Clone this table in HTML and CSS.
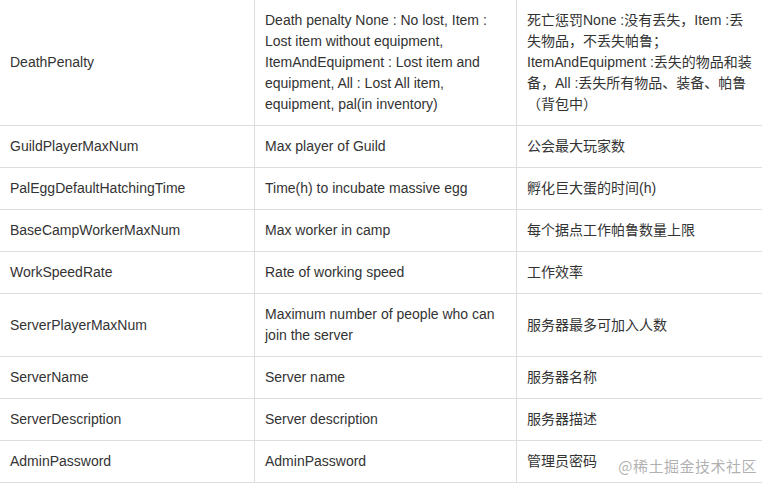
FILE: index.html
```html
<!DOCTYPE html>
<html lang="zh-CN">
<head>
<meta charset="utf-8">
<title>Config</title>
<link rel="stylesheet" href="styles.css">
</head>
<body>
<table class="cfg">
  <colgroup>
    <col class="c1">
    <col class="c2">
    <col class="c3">
  </colgroup>
  <tbody>
    <tr>
      <td>DeathPenalty</td>
      <td>Death penalty None : No lost, Item : Lost item without equipment, ItemAndEquipment : Lost item and equipment, All : Lost All item, equipment, pal(in inventory)</td>
      <td>死亡惩罚None :没有丢失，Item :丢失物品，不丢失帕鲁；ItemAndEquipment :丢失的物品和装备，All :丢失所有物品、装备、帕鲁（背包中）</td>
    </tr>
    <tr>
      <td>GuildPlayerMaxNum</td>
      <td>Max player of Guild</td>
      <td>公会最大玩家数</td>
    </tr>
    <tr>
      <td>PalEggDefaultHatchingTime</td>
      <td>Time(h) to incubate massive egg</td>
      <td>孵化巨大蛋的时间(h)</td>
    </tr>
    <tr>
      <td>BaseCampWorkerMaxNum</td>
      <td>Max worker in camp</td>
      <td>每个据点工作帕鲁数量上限</td>
    </tr>
    <tr>
      <td>WorkSpeedRate</td>
      <td>Rate of working speed</td>
      <td>工作效率</td>
    </tr>
    <tr>
      <td>ServerPlayerMaxNum</td>
      <td>Maximum number of people who can join the server</td>
      <td>服务器最多可加入人数</td>
    </tr>
    <tr>
      <td>ServerName</td>
      <td>Server name</td>
      <td>服务器名称</td>
    </tr>
    <tr>
      <td>ServerDescription</td>
      <td>Server description</td>
      <td>服务器描述</td>
    </tr>
    <tr>
      <td>AdminPassword</td>
      <td>AdminPassword</td>
      <td>管理员密码</td>
    </tr>
  </tbody>
</table>
<div class="watermark">@稀土掘金技术社区</div>
</body>
</html>
```

FILE: styles.css
```css
html, body {
  margin: 0;
  padding: 0;
  background: #ffffff;
  overflow: hidden;
}

body {
  width: 762px;
  height: 483px;
  position: relative;
  font-family: "Liberation Sans", Arial, "Noto Sans CJK SC", sans-serif;
  font-size: 14px;
  line-height: 21px;
  color: #333333;
}

.cfg {
  border-collapse: separate;
  border-spacing: 0;
  table-layout: fixed;
  width: 765px;
}

.c1 { width: 255px; }
.c2 { width: 262px; }
.c3 { width: 248px; }

.cfg td {
  box-sizing: border-box;
  padding: 10px 10px;
  border-right: 1px solid #dedede;
  border-bottom: 1px solid #dedede;
  vertical-align: middle;
  text-align: left;
  word-wrap: break-word;
}

.watermark {
  position: absolute;
  right: 5px;
  bottom: 7px;
  font-family: "Noto Sans CJK SC", sans-serif;
  font-size: 15px;
  line-height: 20px;
  color: rgba(150, 150, 150, 0.75);
  letter-spacing: 0.5px;
}
```
